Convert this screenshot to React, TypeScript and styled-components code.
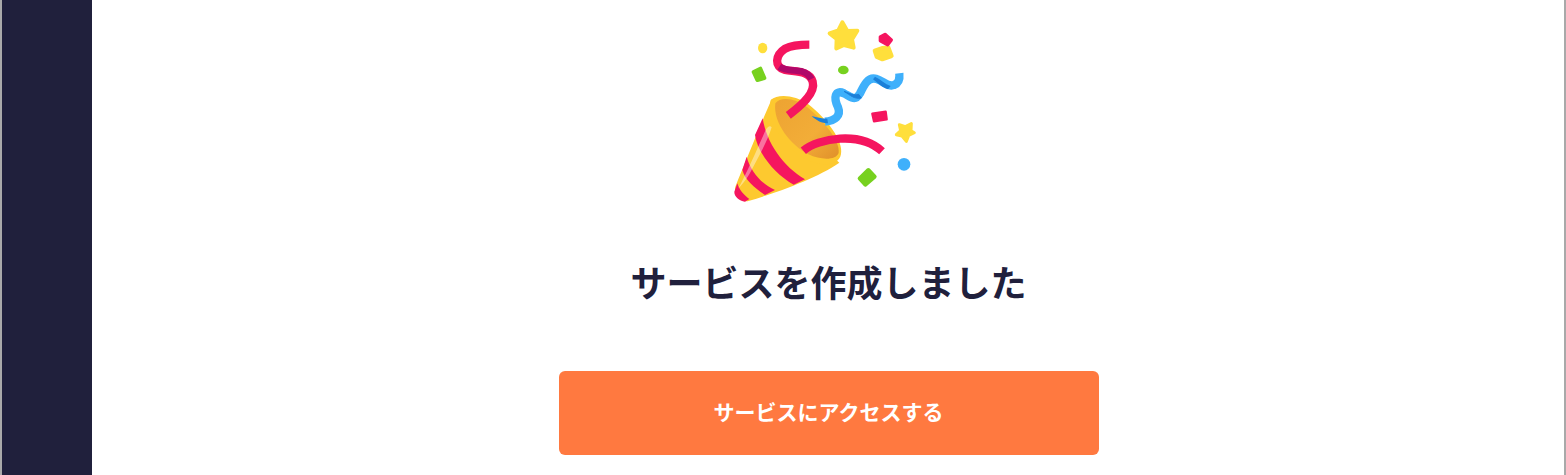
import React from "react";
import styled, { createGlobalStyle } from "styled-components";

const GlobalStyle = createGlobalStyle`
  html, body {
    margin: 0;
    padding: 0;
    height: 100%;
    overflow: hidden;
    background: #fff;
  }
  #root {
    height: 100%;
  }
`;

const Page = styled.div`
  display: flex;
  height: 475px;
  box-sizing: border-box;
  border-left: 2px solid #a9a9a9;
  border-right: 2px solid #a9a9a9;
  font-family: "Noto Sans CJK JP", "Noto Sans", sans-serif;
`;

const Sidebar = styled.aside`
  flex: 0 0 90px;
  background: #20203c;
`;

const Main = styled.main`
  flex: 1;
  display: flex;
  flex-direction: column;
  align-items: center;
  padding: 10px 0 0 1px;
  background: #fff;
`;

const Illustration = styled.svg`
  display: block;
  width: 210px;
  height: 200px;
  margin-right: 7px;
`;

const Title = styled.h1`
  margin: 45px 0 0;
  font-size: 36px;
  line-height: 52px;
  font-weight: 700;
  color: #20203c;
`;

const AccessButton = styled.button`
  width: 540px;
  height: 84px;
  margin-top: 64px;
  padding: 0 0 4px;
  border: 0;
  border-radius: 6px;
  background: #ff7940;
  color: #fff;
  font-family: inherit;
  font-size: 21px;
  font-weight: 700;
  cursor: pointer;
`;

const PartyPopper = () => (
  <Illustration viewBox="0 0 630 600" aria-hidden="true">
    <defs>
      <linearGradient id="inner" x1="0" y1="0" x2="1" y2="1">
        <stop offset="0" stopColor="#eda332" />
        <stop offset="0.6" stopColor="#f2ad38" />
        <stop offset="1" stopColor="#e0902a" />
      </linearGradient>
    </defs>

    {/* confetti */}
    <ellipse cx="128" cy="114" rx="14" ry="16" fill="#ffdf3c" />
    <path d="M101 186 L121 176 L133 204 L112 210 Z" fill="#77d11f" stroke="#77d11f" strokeWidth="12" strokeLinejoin="round" />
    <path d="M367 37 L382 63 L412 62 L396 88 L401 113 L372 105 L349 115 L350 87 L329 70 L355 61 Z" fill="#ffdf3c" stroke="#ffdf3c" strokeWidth="12" strokeLinejoin="round" />
    <path d="M464 122 L488 114 L505 112 L515 138 L487 148 L470 141 Z" fill="#ffdf3c" stroke="#ffdf3c" strokeWidth="12" strokeLinejoin="round" />
    <path d="M481 81 L495 73 L514 90 L503 104 L481 92 Z" fill="#f5155f" stroke="#f5155f" strokeWidth="10" strokeLinejoin="round" />
    <ellipse cx="370" cy="180" rx="16" ry="13" fill="#77d11f" />
    <path d="M457 311 L497 305 L500 328 L462 334 Z" fill="#f5155f" stroke="#f5155f" strokeWidth="7" strokeLinejoin="round" />
    <path d="M538 344 L556 350 L574 341 L573 362 L583 368 L566 376 L559 394 L546 378 L529 374 L542 362 Z" fill="#ffdf3c" stroke="#ffdf3c" strokeWidth="9" strokeLinejoin="round" />
    <circle cx="552" cy="463" r="19" fill="#3fb0fb" />
    <path d="M419 505 L445 480 L464 500 L436 524 Z" fill="#77d11f" stroke="#77d11f" strokeWidth="12" strokeLinejoin="round" />

    {/* cone body */}
    <path d="M155 268 C125 335 75 460 46 530 C40 556 62 580 88 572 C170 548 290 505 358 458 Z" fill="#fdc92f" />
    <path d="M128 325 C140 400 190 470 255 508 L221 524 C160 490 112 425 105 375 Z" fill="#f5155f" />
    <path d="M80 440 C92 485 125 522 165 540 L135 555 C105 535 75 510 67 480 Z" fill="#f5155f" />
    <path d="M52 520 C58 540 72 556 88 567 L75 575 C58 572 42 560 43 545 Z" fill="#f5155f" />
    <path d="M155 352 C150 345 143 350 138 358 C115 410 80 490 55 535 C70 520 85 500 100 470 C125 425 145 385 155 352 Z" fill="#fff" fillOpacity="0.4" />

    {/* mouth */}
    <path d="M152 270 C175 250 225 255 265 283 C320 325 372 395 363 432 C358 465 310 472 262 450 C205 425 135 340 152 270 Z" fill="#fdc92f" />
    <path d="M166 280 C180 260 225 262 262 292 C310 330 362 395 356 428 C350 450 305 452 265 433 C215 408 158 340 166 280 Z" fill="url(#inner)" />

    {/* blue streamer */}
    <path d="M315 335 C345 332 364 318 354 292 C340 262 345 238 372 250 C395 262 405 275 420 250 C432 225 445 198 470 207 C490 213 505 232 522 225 C536 220 540 208 538 190" fill="none" stroke="#3fb0fb" strokeWidth="25" strokeLinecap="butt" />
    <path d="M275 318 C290 332 305 340 324 340 L322 326 C305 326 290 322 275 318 Z" fill="#1b7fd8" />
    <path d="M372 244 C392 256 402 268 424 264 L416 253 C402 258 388 250 372 244 Z" fill="#1b7fd8" stroke="#1b7fd8" strokeWidth="3" />
    <path d="M465 200 C482 208 495 222 512 228 L504 238 C488 234 472 218 459 208 Z" fill="#1b7fd8" />

    {/* pink streamers */}
    <path d="M205 316 C240 290 288 250 278 215 C268 182 228 186 195 180 C162 172 165 135 195 116 C215 106 240 104 268 104" fill="none" stroke="#f5155f" strokeWidth="25" />
    <path d="M178 170 C195 182 225 180 245 184 C258 188 268 195 274 207" fill="none" stroke="#b0086a" strokeWidth="20" />
    <path d="M250 422 C295 385 420 362 486 424" fill="none" stroke="#f5155f" strokeWidth="25" />
  </Illustration>
);

const App = () => (
  <>
    <GlobalStyle />
    <Page>
      <Sidebar />
      <Main>
        <PartyPopper />
        <Title>サービスを作成しました</Title>
        <AccessButton type="button">サービスにアクセスする</AccessButton>
      </Main>
    </Page>
  </>
);

export default App;
